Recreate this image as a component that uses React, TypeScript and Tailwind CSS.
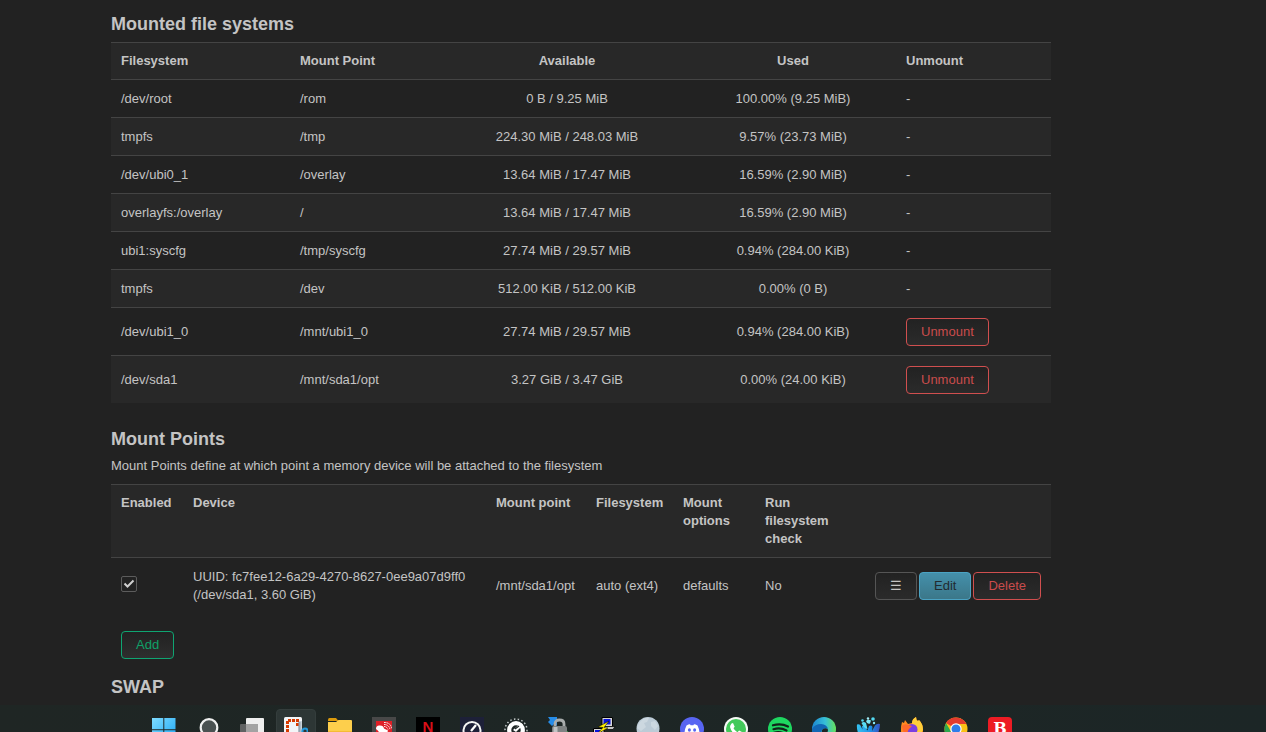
import { type ReactNode } from "react";
import clsx from "clsx";

const mounts = [
  { fs: "/dev/root", point: "/rom", available: "0 B / 9.25 MiB", used: "100.00% (9.25 MiB)" },
  { fs: "tmpfs", point: "/tmp", available: "224.30 MiB / 248.03 MiB", used: "9.57% (23.73 MiB)" },
  { fs: "/dev/ubi0_1", point: "/overlay", available: "13.64 MiB / 17.47 MiB", used: "16.59% (2.90 MiB)" },
  { fs: "overlayfs:/overlay", point: "/", available: "13.64 MiB / 17.47 MiB", used: "16.59% (2.90 MiB)" },
  { fs: "ubi1:syscfg", point: "/tmp/syscfg", available: "27.74 MiB / 29.57 MiB", used: "0.94% (284.00 KiB)" },
  { fs: "tmpfs", point: "/dev", available: "512.00 KiB / 512.00 KiB", used: "0.00% (0 B)" },
  { fs: "/dev/ubi1_0", point: "/mnt/ubi1_0", available: "27.74 MiB / 29.57 MiB", used: "0.94% (284.00 KiB)", removable: true },
  { fs: "/dev/sda1", point: "/mnt/sda1/opt", available: "3.27 GiB / 3.47 GiB", used: "0.00% (24.00 KiB)", removable: true },
];

const thClass = "px-[10px] py-[9px] align-top font-bold";
const tdClass = "px-[10px] pt-[10px] pb-[9px] align-middle";

const buttonColors = {
  neutral: "border-[#555] text-[#c4c4c4] bg-linear-to-b from-[#222] to-[#2b2b2b]",
  negative: "border-[#d04f4f] text-[#c94c4c] bg-linear-to-b from-[#222] to-[#2b2b2b]",
  positive: "border-[#0fa572] text-[#0fa068] bg-linear-to-b from-[#222] to-[#2e2e2e]",
  action: "border-[#4ba3c3] text-[#222b30] bg-linear-to-b from-[#4490ab] to-[#3b7789]",
};

const Button = ({
  color,
  label,
  children,
}: {
  color: keyof typeof buttonColors;
  label?: string;
  children: ReactNode;
}) => (
  <button
    type="button"
    aria-label={label}
    className={clsx("block h-7 rounded-[4px] border px-[14px] leading-[18px]", buttonColors[color])}
  >
    {children}
  </button>
);

const Title = ({ children }: { children: ReactNode }) => (
  <h3 className="text-[18px] leading-9 font-bold">{children}</h3>
);

// Taskbar icons, all on a 24x24 canvas
const apps: { name: string; active?: boolean; icon: ReactNode }[] = [
  {
    name: "Start",
    icon: (
      <>
        <defs>
          <linearGradient id="win" x1="0" y1="0" x2="1" y2="1">
            <stop offset="0" stopColor="#7fdcff" />
            <stop offset="1" stopColor="#1aa5f5" />
          </linearGradient>
        </defs>
        <path fill="url(#win)" d="M0 1h11.3v11.3H0zM12.3 1H23.5v11.3H12.3zM0 13.3h11.3v11H0zM12.3 13.3H23.5v11H12.3z" />
      </>
    ),
  },
  {
    name: "Search",
    icon: (
      <>
        <circle cx="13" cy="10.5" r="8.3" fill="#4a5151" stroke="#f0f0f0" strokeWidth="2.2" />
        <path d="m19 17 4 5" stroke="#f0f0f0" strokeWidth="2.4" />
      </>
    ),
  },
  {
    name: "Task view",
    icon: (
      <>
        <rect x="6" y="1" width="18" height="17" rx="1" fill="#eeeeee" />
        <rect x="0" y="7" width="18" height="16" rx="1" fill="#606262" />
        <path d="M6 7h12v11H6z" fill="#a2a2a2" />
      </>
    ),
  },
  {
    name: "Snipping Tool",
    active: true,
    icon: (
      <>
        <rect x="0" y="0" width="18" height="21" rx="1.5" fill="#f3f5f7" />
        <path d="M14 4h4v17H4v-4h10z" fill="#c9d2da" />
        <path d="M3.5 15V3.5h10V9" fill="none" stroke="#d83b01" strokeWidth="3" strokeDasharray="3 1" />
        <path d="M15.5 5v11l-7 4" fill="none" stroke="#9aa5b0" strokeWidth="2" />
        <circle cx="21" cy="14" r="2.6" fill="none" stroke="#2499dc" strokeWidth="2" />
        <path d="m19 15-5 3" stroke="#2499dc" strokeWidth="2" />
      </>
    ),
  },
  {
    name: "File Explorer",
    icon: (
      <>
        <path d="M0 3q0-2 1.500-2h6.500l2.500 3H0z" fill="#dc9a0c" />
        <path d="M0 5h8l2.500-2H23q1 0 1 1v17H0z" fill="#fdcf4c" />
        <path d="M0 14h24v7H0z" fill="#f5bb35" />
      </>
    ),
  },
  {
    name: "Network monitor",
    icon: (
      <>
        <path d="M0 0h24v24H0z" fill="#484848" />
        <path d="M4 4h16v16H4z" fill="#e01f26" />
        <path d="M4 12q0-4 4-3.500 3.500 0 4 3l4 2-2 6H7q2-4-3-7.500z" fill="#fff" />
        <path
          d="M12 9.500q3 0 4 3M12 7.500q5 0 6 5M12 5.500q7 0 7.500 6"
          fill="none"
          stroke="#fff"
          strokeWidth="1"
          strokeDasharray="1.500 .7"
        />
      </>
    ),
  },
  {
    name: "Netflix",
    icon: (
      <>
        <path d="M0 0h24v24H0z" fill="#000" />
        <text x="12" y="15" textAnchor="middle" fontFamily="Liberation Sans, sans-serif" fontSize="15" fontWeight="700" fill="#d80f18">
          N
        </text>
      </>
    ),
  },
  {
    name: "Speedtest",
    icon: (
      <>
        <path d="M0 0h24v24H0z" fill="#1d2038" />
        <path d="M5.500 19a8.500 8.500 0 1 1 13 0" fill="none" stroke="#f4f4f4" strokeWidth="2" />
        <path d="m11 14 5-6" stroke="#fff" strokeWidth="2.2" />
      </>
    ),
  },
  {
    name: "Benchmark",
    icon: (
      <>
        <circle cx="12" cy="13" r="11" fill="none" stroke="#c4caca" strokeWidth="1.500" strokeDasharray="1.500 2.300" />
        <circle cx="12" cy="13" r="6.800" fill="#1e2625" stroke="#fff" strokeWidth="4.200" />
        <path d="m9 13 8-7 2 2-7 7z" fill="#fff" />
        <path d="m11 12 4-3" stroke="#1e2625" strokeWidth="1.200" />
      </>
    ),
  },
  {
    name: "VPN client",
    icon: (
      <>
        <path d="M0 0h9v9l-2.500-2.500L4 9 0 5l2-2z" fill="#268ce8" />
        <path d="M7 12V7q0-4 4.500-4T16 7v5" fill="none" stroke="#a9adad" strokeWidth="2.800" />
        <rect x="4" y="9" width="15" height="13" rx="2" fill="#7f8383" />
        <path d="M5.500 10h4v11h-4z" fill="#c0c3c3" />
        <path d="m15 17 5-3v8z" fill="#3fae49" />
      </>
    ),
  },
  {
    name: "PuTTY",
    icon: (
      <>
        <path d="M10 .5h10.500v9H10z" fill="#d8d8d8" stroke="#000" />
        <path d="M11.500 2h7v5.500h-7z" fill="#0a14d8" />
        <path d="M12 9.500h11l-2 3h-9z" fill="#c4c4c4" stroke="#000" strokeWidth=".7" />
        <path d="M1.500 11.500H12v9H1.500z" fill="#d8d8d8" stroke="#000" />
        <path d="M3 13h7v5.500H3z" fill="#0a14d8" />
        <path d="m17 4-11 6 5 .500L5 17l11-6-4-.500z" fill="#ffee00" stroke="#000" strokeWidth=".5" />
      </>
    ),
  },
  {
    name: "Globe",
    icon: (
      <>
        <circle cx="12" cy="11.500" r="11.500" fill="#bccbd6" />
        <path d="M3 6q5-6 10-5l-2 4-3 1 2 4-5 4-4-3zM15 5l4-1 3 5-3 4-4-4z" fill="#ccd8e0" />
      </>
    ),
  },
  {
    name: "Discord",
    icon: (
      <>
        <circle cx="12" cy="12" r="12" fill="#5865f2" />
        <path d="M6.500 8.500q2-1.200 3.500-1.200l.6 1h2.800l.6-1q1.500 0 3.500 1.200 2 4 2 8-2 1.500-4 1.500l-1-1.500h-5l-1 1.500q-2 0-4-1.500 0-4 2-8z" fill="#fff" />
        <ellipse cx="9.400" cy="13" rx="1.500" ry="1.700" fill="#5865f2" />
        <ellipse cx="14.600" cy="13" rx="1.500" ry="1.700" fill="#5865f2" />
      </>
    ),
  },
  {
    name: "WhatsApp",
    icon: (
      <>
        <circle cx="12" cy="12" r="12" fill="#f6faf6" />
        <circle cx="12" cy="12" r="10" fill="#43c95a" />
        <path d="M7.500 6.500 9 6l1.700 3.700-1.200 1.600q1.300 2.700 4 3.900l1.600-1.600 3.500 1.700q0 3-3.300 3.200-7.300-1-9.300-8.500 0-2 1.500-3.500z" fill="#fff" />
      </>
    ),
  },
  {
    name: "Spotify",
    icon: (
      <>
        <circle cx="12" cy="12" r="12" fill="#1ed760" />
        <path d="M5 8.300q8-2.500 15 1.200M5.500 12.200q7-2 13 1.300M6 15.800q6-1.600 11 1.200" fill="none" stroke="#10251a" strokeWidth="2.200" strokeLinecap="round" />
      </>
    ),
  },
  {
    name: "Microsoft Edge",
    icon: (
      <>
        <defs>
          <linearGradient id="edge" x1="0" y1="0" x2="1" y2="0">
            <stop offset="0" stopColor="#1c85d0" />
            <stop offset=".55" stopColor="#36bfd8" />
            <stop offset="1" stopColor="#66e25a" />
          </linearGradient>
        </defs>
        <circle cx="12" cy="12" r="12" fill="url(#edge)" />
        <path d="M0 12Q3 7 9 7q6 .5 7 5-3-2-6 1-3 5 2 10Q1 23 0 12z" fill="#1266b4" />
        <path d="M10 13q3-3 6-.5 0 3-2 4 5 2 9-1-3 6-9 6-5-3-4-8.500z" fill="#1e2625" />
      </>
    ),
  },
  {
    name: "Splash",
    icon: (
      <>
        <defs>
          <linearGradient id="splash" x1="0" y1="0" x2="1" y2="0">
            <stop offset="0" stopColor="#35c4f2" />
            <stop offset=".6" stopColor="#1d8fe6" />
            <stop offset="1" stopColor="#3a50c0" />
          </linearGradient>
        </defs>
        <path
          d="M1 7.500q3-1 4 2l1.500 3L6 9q3-1 4 2.500l1.500 2L13 9q3-1.500 3.500 1l-.5 4 3-5.500q2-2.500 5-1.500 0 8-6 16H7Q0 16 1 7.500z"
          fill="url(#splash)"
        />
        <path d="M5.500 6q2-2 4.500 0l1.500 6q-3 0-6-6z" fill="#59ddf3" />
        <path d="M10 4q2-2 5-.5l-1 3q-3 1-4-2.500z" fill="#7ce8f7" />
        <circle cx="6.500" cy="3.500" r="1.300" fill="#54daf2" />
        <circle cx="17" cy="2" r="1.800" fill="#54daf2" />
        <circle cx="12" cy="1.500" r="1.200" fill="#a2f0fa" />
        <circle cx="18" cy="6" r="1.200" fill="#8be9f7" />
      </>
    ),
  },
  {
    name: "Firefox",
    icon: (
      <>
        <path d="M2 5l2 1 1-3 3 4 4-1q0-4 4-6 0 3 2 4l1-1q4 4 4 10 0 11-11 11T1 13q0-5 1-8z" fill="#fe8a20" />
        <path d="M12 6q0-4 4-6 0 3 2 4l1-1q4 4 4 10l-4 7-5-7z" fill="#ffcf3a" />
        <circle cx="12" cy="12.500" r="5.500" fill="#7b3fe0" />
        <path d="M2 9q3-3 6-1l4 1-3 3q-3 4 1 7-7 0-8-10z" fill="#ff6a2a" />
      </>
    ),
  },
  {
    name: "Google Chrome",
    icon: (
      <>
        <circle cx="12" cy="12" r="11.500" fill="#fbc116" />
        <path d="M12 12 2 6Q5 .5 12 .5T22.500 7H12z" fill="#e33b2e" />
        <path d="M2 6 12 23.500Q.5 23 .5 12q0-3 1.500-6z" fill="#2da94f" />
        <circle cx="12" cy="12" r="5.700" fill="#fff" />
        <circle cx="12" cy="12" r="4.500" fill="#2f7de9" />
      </>
    ),
  },
  {
    name: "Bitdefender",
    icon: (
      <>
        <rect width="24" height="24" rx="4" fill="#ed1c24" />
        <text x="12" y="17" textAnchor="middle" fontFamily="DejaVu Serif, serif" fontSize="16" fontWeight="700" fill="#fff">
          B
        </text>
      </>
    ),
  },
];

const MountedFileSystems = () => (
  <section className="mb-[18px]">
    <Title>Mounted file systems</Title>
    <table className="w-full table-fixed border-collapse">
      <colgroup>
        <col className="w-[179px]" />
        <col className="w-[154px]" />
        <col className="w-[246px]" />
        <col className="w-[206px]" />
        <col className="w-[155px]" />
      </colgroup>
      <thead>
        <tr className="border-t border-[#444] bg-[#282828] text-left">
          <th className={thClass}>Filesystem</th>
          <th className={thClass}>Mount Point</th>
          <th className={clsx(thClass, "text-center")}>Available</th>
          <th className={clsx(thClass, "text-center")}>Used</th>
          <th className={thClass}>Unmount</th>
        </tr>
      </thead>
      <tbody>
        {mounts.map((mount) => (
          <tr key={mount.point} className="border-t border-[#444] even:bg-[#282828]">
            <td className={tdClass}>{mount.fs}</td>
            <td className={tdClass}>{mount.point}</td>
            <td className={clsx(tdClass, "text-center")}>{mount.available}</td>
            <td className={clsx(tdClass, "text-center")}>{mount.used}</td>
            <td className={tdClass}>
              {mount.removable ? <Button color="negative">Unmount</Button> : "-"}
            </td>
          </tr>
        ))}
      </tbody>
    </table>
  </section>
);

const MountPoints = () => (
  <section className="mb-[10px]">
    <Title>Mount Points</Title>
    <p className="mb-[9px]">
      Mount Points define at which point a memory device will be attached to the filesystem
    </p>
    <table className="w-full table-fixed border-collapse">
      <colgroup>
        <col className="w-[72px]" />
        <col className="w-[303px]" />
        <col className="w-[100px]" />
        <col className="w-[87px]" />
        <col className="w-[82px]" />
        <col className="w-[83px]" />
        <col className="w-[213px]" />
      </colgroup>
      <thead>
        <tr className="border-t border-[#444] bg-[#282828] text-left">
          <th className={thClass}>Enabled</th>
          <th className={thClass}>Device</th>
          <th className={thClass}>Mount point</th>
          <th className={thClass}>Filesystem</th>
          <th className={thClass}>Mount options</th>
          <th className={thClass}>Run filesystem check</th>
          <td />
        </tr>
      </thead>
      <tbody>
        <tr className="border-t border-[#444]">
          <td className={tdClass}>
            <label className="mb-1 grid size-4">
              <input
                type="checkbox"
                defaultChecked
                aria-label="Enabled"
                className="peer col-start-1 row-start-1 size-4 appearance-none rounded-[2px] border border-[#5c5c5c] bg-[#222]"
              />
              <svg
                viewBox="0 0 16 16"
                className="pointer-events-none invisible col-start-1 row-start-1 size-4 peer-checked:visible"
              >
                <path d="m3.500 7.500 3 3 6-6" fill="none" stroke="#d0d0d0" strokeWidth="2" />
              </svg>
            </label>
          </td>
          <td className={tdClass}>
            UUID: fc7fee12-6a29-4270-8627-0ee9a07d9ff0
            <br />
            (/dev/sda1, 3.60 GiB)
          </td>
          <td className={tdClass}>/mnt/sda1/opt</td>
          <td className={tdClass}>auto (ext4)</td>
          <td className={tdClass}>defaults</td>
          <td className={tdClass}>No</td>
          <td className={tdClass}>
            <div className="flex justify-end gap-[2px]">
              <Button color="neutral" label="Drag to reorder">☰</Button>
              <Button color="action">Edit</Button>
              <Button color="negative">Delete</Button>
            </div>
          </td>
        </tr>
      </tbody>
    </table>
    <div className="mt-[18px] px-[10px]">
      <Button color="positive">Add</Button>
    </div>
  </section>
);

const Taskbar = () => (
  <nav
    aria-label="Taskbar"
    className="flex h-[27px] shrink-0 items-start gap-1 overflow-hidden bg-linear-to-r from-[#1f2624] to-[#1c2626] pt-1 pl-36"
  >
    {apps.map((app) => (
      <button
        key={app.name}
        type="button"
        aria-label={app.name}
        className={clsx(
          "flex size-10 shrink-0 items-center justify-center rounded-[4px] border",
          app.active ? "border-[#343d3c] bg-[#2d3635]" : "border-transparent"
        )}
      >
        <svg viewBox="0 0 24 24" className="size-6">
          {app.icon}
        </svg>
      </button>
    ))}
  </nav>
);

const App = () => {
  return (
    <div className="flex h-screen flex-col overflow-hidden bg-[#222] font-['Liberation_Sans',Arial,sans-serif] text-[13px] leading-[18px] text-[#c4c4c4]">
      <main className="min-h-0 flex-1 overflow-hidden pt-[6px] pr-[215px] pl-[111px]">
        <MountedFileSystems />
        <MountPoints />
        <Title>SWAP</Title>
      </main>
      <Taskbar />
    </div>
  );
};

export default App;
